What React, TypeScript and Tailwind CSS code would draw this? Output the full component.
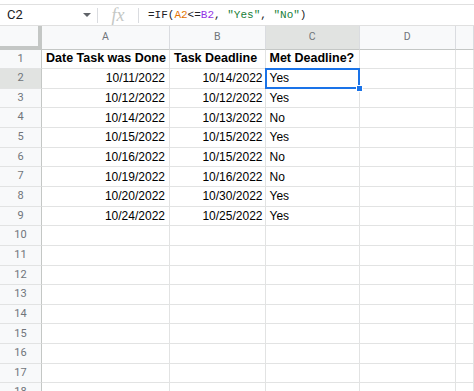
interface Row {
  done: string;
  deadline: string;
  met: string;
}

const rows: Row[] = [
  { done: '10/11/2022', deadline: '10/14/2022', met: 'Yes' },
  { done: '10/12/2022', deadline: '10/12/2022', met: 'Yes' },
  { done: '10/14/2022', deadline: '10/13/2022', met: 'No' },
  { done: '10/15/2022', deadline: '10/15/2022', met: 'Yes' },
  { done: '10/16/2022', deadline: '10/15/2022', met: 'No' },
  { done: '10/19/2022', deadline: '10/16/2022', met: 'No' },
  { done: '10/20/2022', deadline: '10/30/2022', met: 'Yes' },
  { done: '10/24/2022', deadline: '10/25/2022', met: 'Yes' },
];

const cols = 'grid grid-cols-[42px_128px_95.5px_94.5px_95.5px_1fr]';
const cell = 'border-r border-b border-[#e2e3e3] px-[4px] flex items-center overflow-hidden whitespace-nowrap';
const rowHead =
  'border-r border-r-[#c4c7c5] border-b border-b-[#e2e3e3] flex items-center justify-center text-[11px] text-[#70757a] font-["Roboto",sans-serif]';

function FormulaBar() {
  return (
    <div className="h-[22px] border-t border-b border-[#e0e0e0] flex items-center bg-white">
      <div className="w-[97px] flex items-center justify-between pl-[7px] pr-[4px]">
        <span className="text-[13px] text-[#202124] font-['Roboto',sans-serif]">C2</span>
        <svg width="8" height="4" viewBox="0 0 8 4" className="mr-[2px]">
          <path d="M0 0 L8 0 L4 4 Z" fill="#5f6368" />
        </svg>
      </div>
      <div className="w-px h-[15px] bg-[#dadce0]" />
      <div className="w-[40px] flex items-center justify-center">
        <span className="text-[18px] italic text-[#c4c7c5] font-['Liberation_Serif',serif] leading-none">fx</span>
      </div>
      <div className="w-px h-[15px] bg-[#dadce0]" />
      <div className="pl-[9px] text-[11px] font-['Liberation_Mono',monospace] text-[#202124] whitespace-nowrap">
        =IF(<span className="text-[#e37400]">A2</span>&lt;=<span className="text-[#9334e6]">B2</span>,{' '}
        <span className="text-[#188038]">"Yes"</span>, <span className="text-[#188038]">"No"</span>)
      </div>
    </div>
  );
}

function ColumnHeader() {
  const letters = ['A', 'B', 'C', 'D', ''];
  return (
    <div className={`${cols} h-[23.5px]`}>
      <div className="bg-[#f8f9fa] border-r-[4px] border-b-[4px] border-[#c4c7c5]" />
      {letters.map((l) => (
        <div
          key={l || 'E'}
          className={`${l === 'C' ? 'bg-[#e1e3e1]' : 'bg-[#f8f9fa]'} border-r border-[#dadce0] border-b border-b-[#c4c7c5] flex items-center justify-center text-[10.5px] text-[#70757a] font-['Roboto',sans-serif]`}
        >
          {l}
        </div>
      ))}
    </div>
  );
}

export default function App() {
  const total = 18;
  return (
    <div className="w-[474px] h-[391px] overflow-hidden bg-white font-['Liberation_Sans',Arial,sans-serif]">
      <div className="h-[4px]" />
      <FormulaBar />
      <ColumnHeader />
      {Array.from({ length: total }).map((_, i) => {
        const n = i + 1;
        const data = n >= 2 && n <= 9 ? rows[n - 2] : null;
        const head = n === 1 ? 'font-bold text-[12.5px] justify-start' : 'justify-end';
        return (
          <div key={n} className={`${cols} h-[19.65px] text-[12px] text-black`}>
            <div className={`${rowHead} ${n === 2 ? 'bg-[#e1e3e1]' : 'bg-[#f8f9fa]'}`}>{n}</div>
            <div className={`${cell} ${head}`}>{n === 1 ? 'Date Task was Done' : data?.done}</div>
            <div className={`${cell} pr-[2px] ${head}`}>{n === 1 ? 'Task Deadline' : data?.deadline}</div>
            <div
              className={`${cell} relative ${n === 1 ? 'font-bold text-[12.5px]' : ''} ${n === 2 ? 'z-10 overflow-visible' : ''}`}
            >
              {n === 1 ? 'Met Deadline?' : data?.met}
              {n === 2 && (
                <>
                  <div className="absolute inset-[-1px] border-2 border-[#1a73e8] pointer-events-none" />
                  <div className="absolute right-[-4px] bottom-[-4px] w-[7px] h-[7px] bg-[#1a73e8] border border-white" />
                </>
              )}
            </div>
            <div className={cell} />
            <div className={cell} />
          </div>
        );
      })}
    </div>
  );
}
